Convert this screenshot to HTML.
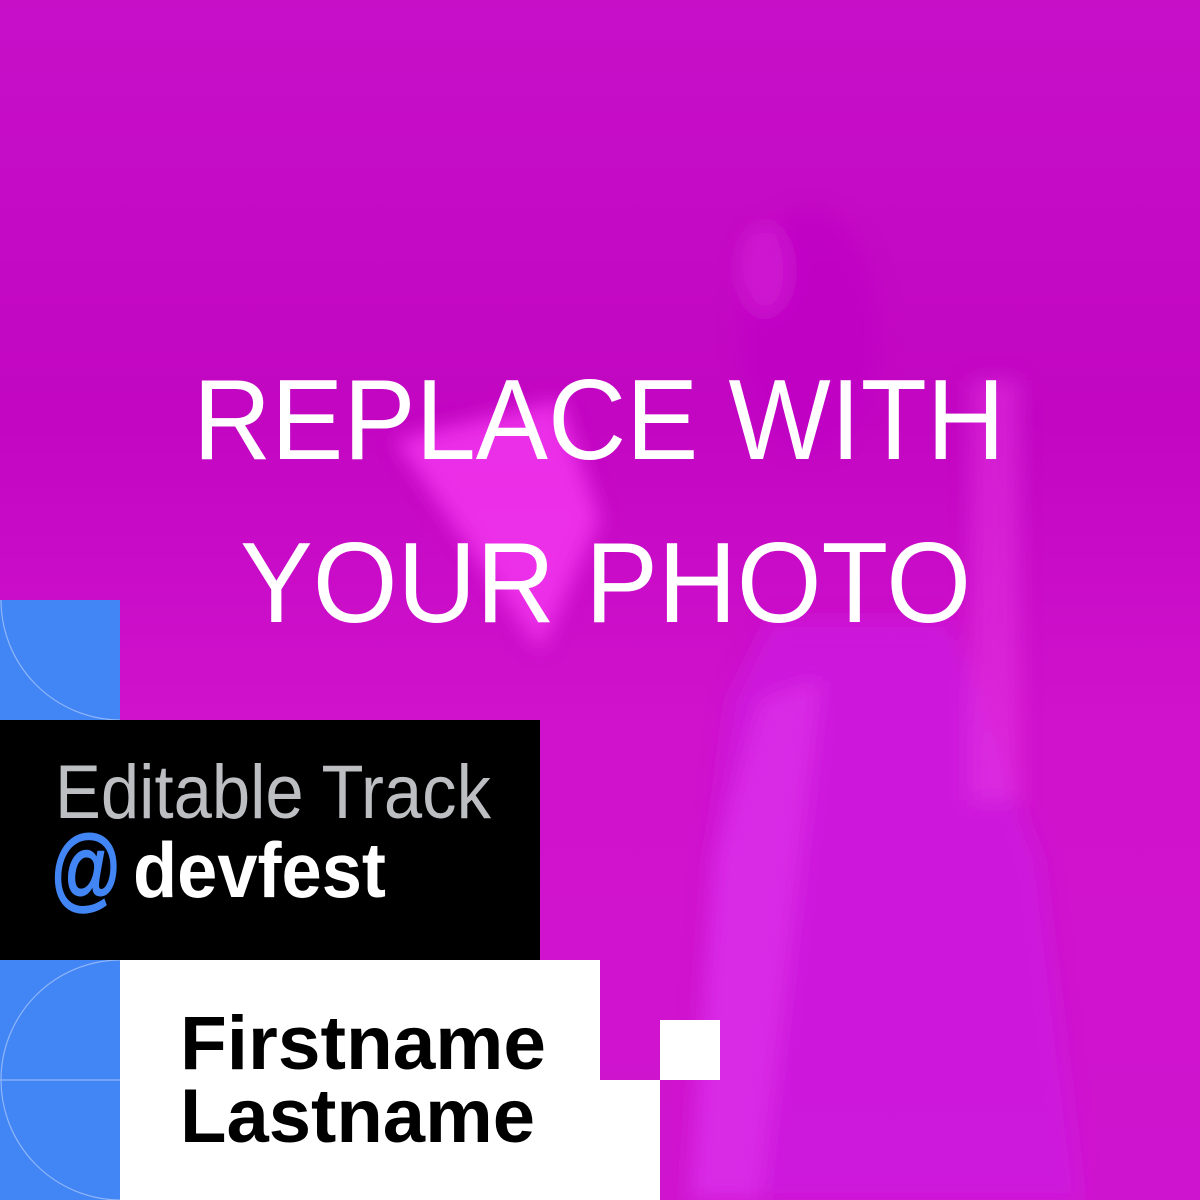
<!DOCTYPE html>
<html><head><meta charset="utf-8"><style>
html,body{margin:0;padding:0;width:1200px;height:1200px;overflow:hidden;background:#c60fc6}
svg{display:block}
text{font-family:"Liberation Sans",sans-serif}
</style></head><body>
<svg width="1200" height="1200" viewBox="0 0 1200 1200" xmlns="http://www.w3.org/2000/svg">
<defs>
<linearGradient id="bg" x1="0" y1="0" x2="0" y2="1">
<stop offset="0" stop-color="#c70fc8"/>
<stop offset="0.35" stop-color="#c206c2"/>
<stop offset="0.6" stop-color="#d012cc"/>
<stop offset="1" stop-color="#cf14cf"/>
</linearGradient>
<filter id="bl"><feGaussianBlur stdDeviation="10"/></filter>
</defs>
<rect width="1200" height="1200" fill="url(#bg)"/>
<g filter="url(#bl)">
<path d="M690 1200 L710 860 L730 700 L770 620 L950 620 L1040 860 L1080 1200 Z" fill="#cc1ee0" opacity="0.75"/>
<path d="M690 1200 L715 860 L760 700 L820 680 L760 1200 Z" fill="#e63cf0" opacity="0.5"/>
<ellipse cx="810" cy="330" rx="70" ry="120" fill="#bf08c4" opacity="0.8"/>
<ellipse cx="765" cy="270" rx="25" ry="45" fill="#e030e0" opacity="0.4"/>
<path d="M395 440 L560 400 L600 520 L540 650 Z" fill="#f538f0" opacity="0.8"/>
<rect x="970" y="380" width="50" height="420" fill="#e83ae6" opacity="0.45"/>
</g>
<rect x="0" y="600" width="120" height="120" fill="#4285f4"/>
<path d="M1 600 A120 120 0 0 0 120 720" fill="none" stroke="#8fb6fa" stroke-width="1.2"/>
<rect x="0" y="960" width="120" height="240" fill="#4285f4"/>
<path d="M120 960 A120 120 0 0 0 1 1080 A120 120 0 0 0 120 1200" fill="none" stroke="#8fb6fa" stroke-width="1.2"/>
<line x1="0" y1="1080" x2="120" y2="1080" stroke="#8fb6fa" stroke-width="1.2"/>
<rect x="0" y="720" width="540" height="240" fill="#000"/>
<rect x="120" y="960" width="480" height="240" fill="#fff"/>
<rect x="600" y="1080" width="60" height="120" fill="#fff"/>
<rect x="660" y="1020" width="60" height="60" fill="#fff"/>
<text x="193" y="459" font-size="114" fill="#fff" textLength="812" lengthAdjust="spacingAndGlyphs">REPLACE WITH</text>
<text x="240" y="622" font-size="114" fill="#fff" textLength="731" lengthAdjust="spacingAndGlyphs">YOUR PHOTO</text>
<text x="55" y="818" font-size="76" fill="#bcbec2" textLength="436" lengthAdjust="spacingAndGlyphs">Editable Track</text>
<text x="50" y="900" font-size="92" fill="#4285f4" stroke="#4285f4" stroke-width="2" textLength="72" lengthAdjust="spacingAndGlyphs">@</text>
<text x="133" y="897" font-size="78" font-weight="bold" fill="#fff" textLength="253" lengthAdjust="spacingAndGlyphs">devfest</text>
<text x="180" y="1069" font-size="76" font-weight="bold" fill="#000" textLength="366" lengthAdjust="spacingAndGlyphs">Firstname</text>
<text x="180" y="1142" font-size="76" font-weight="bold" fill="#000" textLength="355" lengthAdjust="spacingAndGlyphs">Lastname</text>
</svg>
</body></html>
